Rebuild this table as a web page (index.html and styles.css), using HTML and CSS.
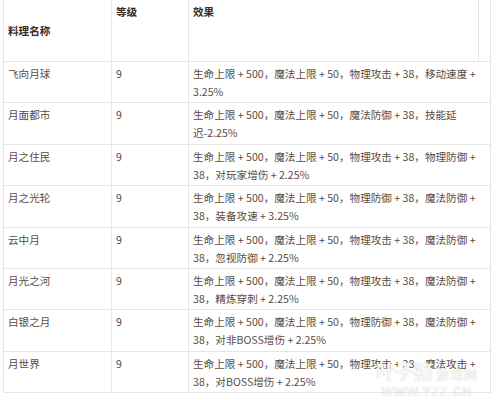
FILE: index.html
```html
<!DOCTYPE html>
<html lang="zh">
<head>
<meta charset="utf-8">
<link rel="stylesheet" href="styles.css">
</head>
<body>
<div class="wrap">
<table class="food">
  <colgroup>
    <col class="c-name">
    <col class="c-level">
    <col class="c-effect">
    <col class="c-extra">
  </colgroup>
  <thead>
    <tr class="head">
      <th class="h-name">料理名称</th>
      <th class="h-top">等级</th>
      <th class="h-top">效果</th>
      <th class="h-extra"></th>
    </tr>
  </thead>
  <tbody>
    <tr><td>飞向月球</td><td>9</td><td colspan="2" class="eff">生命上限 + 500，魔法上限 + 50，物理攻击 + 38，移动速度 + 3.25%</td></tr>
    <tr><td>月面都市</td><td>9</td><td colspan="2" class="eff">生命上限 + 500，魔法上限 + 50，魔法防御 + 38，技能延迟-2.25%</td></tr>
    <tr><td>月之住民</td><td>9</td><td colspan="2" class="eff">生命上限 + 500，魔法上限 + 50，物理攻击 + 38，物理防御 + 38，对玩家增伤 + 2.25%</td></tr>
    <tr><td>月之光轮</td><td>9</td><td colspan="2" class="eff">生命上限 + 500，魔法上限 + 50，物理防御 + 38，魔法防御 + 38，装备攻速 + 3.25%</td></tr>
    <tr><td>云中月</td><td>9</td><td colspan="2" class="eff">生命上限 + 500，魔法上限 + 50，物理攻击 + 38，魔法防御 + 38，忽视防御 + 2.25%</td></tr>
    <tr><td>月光之河</td><td>9</td><td colspan="2" class="eff">生命上限 + 500，魔法上限 + 50，物理攻击 + 38，魔法防御 + 38，精炼穿刺 + 2.25%</td></tr>
    <tr><td>白银之月</td><td>9</td><td colspan="2" class="eff">生命上限 + 500，魔法上限 + 50，物理防御 + 38，魔法防御 + 38，对非BOSS增伤 + 2.25%</td></tr>
    <tr><td>月世界</td><td>9</td><td colspan="2" class="eff">生命上限 + 500，魔法上限 + 50，物理攻击 + 38，魔法攻击 + 38，对BOSS增伤 + 2.25%</td></tr>
  </tbody>
</table>
<div class="mark">
  <div class="mark-top"><span class="mark-big">叶子猪</span><span class="mark-small">游戏网</span></div>
  <div class="mark-url">WWW.YZZ.CN</div>
</div>
</div>
</body>
</html>
```

FILE: styles.css
```css
html, body {
  margin: 0;
  padding: 0;
  background: #ffffff;
}
body {
  font-family: "Noto Sans CJK SC", "Noto Sans", sans-serif;
  font-size: 10.6px;
  line-height: 18px;
  color: #5a4b3f;
}
.wrap {
  position: relative;
  width: 498px;
  height: 400px;
  overflow: hidden;
  padding-left: 3px;
  box-sizing: border-box;
}
.food {
  border-collapse: collapse;
  table-layout: fixed;
  width: 487px;
  margin-top: -1px;
}
.c-name { width: 108px; }
.c-level { width: 77px; }
.c-effect { width: 290px; }
.c-extra { width: 12px; }
.food th, .food td {
  border: 1px solid #e6e6e6;
  padding: 3px 4px 1.4px;
  text-align: left;
  vertical-align: top;
}
.food th {
  font-weight: bold;
  color: #3a2a1c;
}
.head { height: 62px; }
.food th.h-name { vertical-align: middle; }
.food th.h-extra { padding: 0; }
.food td.eff { padding-right: 12px; }
.mark {
  position: absolute;
  left: 376px;
  top: 360px;
  color: rgba(255, 255, 255, 0.92);
  text-shadow: 0 0 1px rgba(120, 120, 120, 0.5);
  font-family: "Noto Sans CJK SC", sans-serif;
}
.mark-top {
  display: flex;
  align-items: baseline;
  gap: 3px;
  line-height: 22px;
}
.mark-big {
  font-size: 19px;
  font-weight: bold;
}
.mark-small {
  font-size: 13px;
  letter-spacing: 1px;
}
.mark-url {
  font-family: "Liberation Sans", sans-serif;
  font-size: 12px;
  line-height: 14px;
  letter-spacing: 1px;
  padding-left: 6px;
}
```
